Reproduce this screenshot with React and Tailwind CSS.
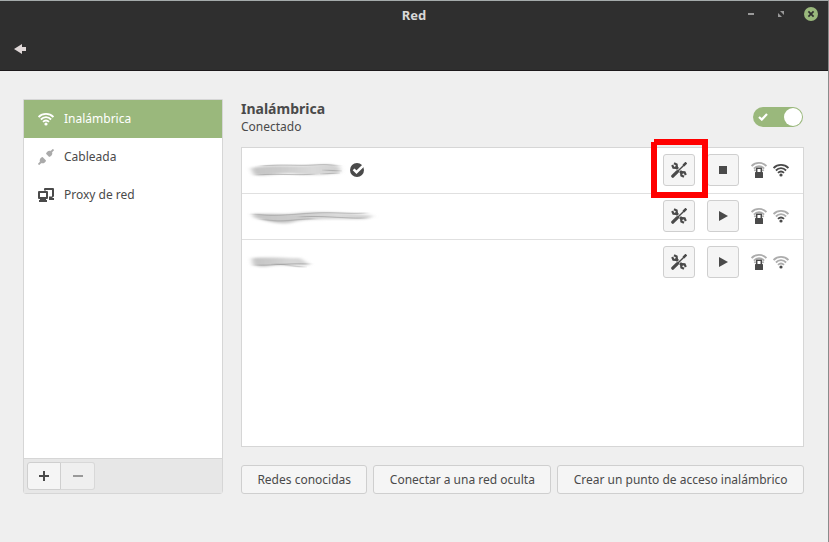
import React, { useState } from 'react';
import clsx from 'clsx';

const WifiIcon = ({ strength = 4, className }) => {
  const level = (n) => (strength >= n ? 1 : 0.45);
  return (
    <svg viewBox="0 0 16 16" className={clsx('w-4 h-4 shrink-0', className)} fill="none" stroke="currentColor" strokeWidth="1.8" aria-hidden="true">
      <path d="M0.6 6C4.6 1.9 11.4 1.9 15.4 6" opacity={level(4)} />
      <path d="M2.9 8.5C5.9 5.4 10.1 5.4 13.1 8.5" opacity={level(3)} />
      <path d="M5 10.9C6.8 9 9.2 9 11 10.9" opacity={level(2)} />
      <circle cx="8" cy="13" r="1.6" fill="currentColor" stroke="none" />
    </svg>
  );
};

const SecureWifiIcon = () => (
  <svg viewBox="0 0 16 16" className="w-4 h-4 shrink-0" fill="none" stroke="currentColor" role="img" aria-label="Red protegida">
    <g opacity="0.45" strokeWidth="1.8">
      <path d="M0.6 4C4.6 -0.1 11.4 -0.1 15.4 4" />
      <path d="M2.9 6.6C5.9 3.4 10.1 3.4 13.1 6.6" />
      <path d="M3.4 8.8L4.6 7.6M12.6 8.8L11.4 7.6" />
    </g>
    <path d="M5.7 10.5V6.2H10.3V10.5" strokeWidth="1.5" strokeLinejoin="round" />
    <rect x="4" y="10" width="8" height="6" rx="0.5" fill="currentColor" stroke="none" />
  </svg>
);

const CableIcon = () => (
  <svg viewBox="0 0 16 16" className="w-4 h-4 shrink-0 text-[#aaaaaa]" fill="currentColor" aria-hidden="true">
    <path d="M0.5 15.5L3 13M13 3L15.5 0.5" stroke="currentColor" strokeWidth="1.8" />
    <path d="M1.8 12.6C1.2 10.4 2.8 8.4 4.6 8L8 11.4C7.6 13.4 5.6 14.8 3.4 14.2Z" />
    <path d="M8 4.8C8.4 2.8 10.4 1.3 12.4 1.8L14.2 3.6C14.8 5.6 13.2 7.6 11.2 8Z" />
  </svg>
);

const ProxyIcon = () => (
  <svg viewBox="0 0 16 16" className="w-4 h-4 shrink-0" fill="currentColor" fillRule="evenodd" aria-hidden="true">
    <path d="M7 1H15A1 1 0 0 1 16 2V9A1 1 0 0 1 15 10H14.5V11H16V13H11V9.5H14V3H8V3.5H6V2A1 1 0 0 1 7 1Z" />
    <path d="M1 4H9A1 1 0 0 1 10 5V11A1 1 0 0 1 9 12H8V13H9V15H1V13H2V12H1A1 1 0 0 1 0 11V5A1 1 0 0 1 1 4ZM2 6V10H8V6Z" />
  </svg>
);

const ToolsIcon = () => (
  <svg viewBox="0 0 16 16" className="w-4 h-4" fill="none" stroke="currentColor" aria-hidden="true">
    <path d="M4.6 4.6L11.4 11.4" strokeWidth="2.8" />
    <path d="M3 1.2L5.6 2.4L5.8 4.4L4.6 5.8L2.4 5.6L1.2 3" strokeWidth="2.2" />
    <path d="M13 14.8L10.4 13.6L10.2 11.6L11.4 10.2L13.6 10.4L14.8 13" strokeWidth="2.2" />
    <path d="M6 10L14 2" strokeWidth="3" className="stroke-[#f5f5f5]" />
    <path d="M7 9L13.6 2.4" strokeWidth="1.4" />
    <path d="M12.4 3.6L15.4 0.6" strokeWidth="2.6" />
    <path d="M1.8 14.2L6.4 9.6" strokeWidth="3.2" strokeLinecap="round" />
  </svg>
);

const ConnectedIcon = () => (
  <svg viewBox="0 0 14 14" className="w-3.5 h-3.5 ml-2 shrink-0" role="img" aria-label="Conectada">
    <circle cx="7" cy="7" r="7" fill="currentColor" />
    <path d="M3.6 6.4L6.5 9.2L14 2" fill="none" stroke="white" strokeWidth="2.6" />
  </svg>
);

// Network names are smeared out, each with its own strokes
const smudges = {
  first: {
    width: 92,
    body: 'M1 7C20 3 42 6 62 4S84 4 90 6L90 12C72 14 62 15 46 13S18 16 4 14Z',
    lines: ['M12 5C32 3 48 5 64 4S80 4 88 5', 'M8 14C26 12 48 15 64 13', 'M74 9L90 10', 'M72 13L88 12'],
  },
  second: {
    width: 126,
    body: 'M2 7C20 6 34 8 50 6S96 5 124 9L116 12C84 13 58 11 44 15S18 14 5 11Z',
    lines: ['M4 7C24 10 44 7 64 6S96 7 116 6', 'M12 12C32 17 48 11 64 12', 'M50 10C70 8 98 12 114 11'],
  },
  third: {
    width: 62,
    body: 'M2 5C20 4 36 5 50 5L60 12C42 14 30 11 20 13S8 13 3 12Z',
    lines: ['M6 12C20 13 34 10 58 11', 'M24 11C38 11 44 14 54 14'],
  },
};

const Smudge = ({ name }) => {
  const { width, body, lines } = smudges[name];
  return (
    <svg width={width} height="18" viewBox={`0 0 ${width} 18`} className="shrink-0 overflow-visible" role="img" aria-label="Red oculta">
      <defs>
        <filter id={`soft-${name}`} x="-10%" y="-40%" width="120%" height="180%">
          <feGaussianBlur stdDeviation="2.4 0.9" />
        </filter>
        <filter id={`fine-${name}`} x="-10%" y="-200%" width="120%" height="500%">
          <feGaussianBlur stdDeviation="3 0.5" />
        </filter>
        <linearGradient id={`shade-${name}`}>
          <stop offset="0" stopColor="#c4c4c4" />
          <stop offset="0.35" stopColor="#cccccc" />
          <stop offset="0.7" stopColor="#dadada" />
          <stop offset="1" stopColor="#d0d0d0" />
        </linearGradient>
      </defs>
      <path d={body} fill={`url(#shade-${name})`} filter={`url(#soft-${name})`} />
      {lines.map((line) => (
        <path key={line} d={line} fill="none" stroke="#8c8c8c" opacity="0.55" filter={`url(#fine-${name})`} />
      ))}
    </svg>
  );
};

const sections = [
  { id: 'wifi', label: 'Inalámbrica', icon: WifiIcon },
  { id: 'wired', label: 'Cableada', icon: CableIcon },
  { id: 'proxy', label: 'Proxy de red', icon: ProxyIcon },
];

const networks = [
  { id: 'first', connected: true, strength: 4, highlighted: true },
  { id: 'second', connected: false, strength: 2 },
  { id: 'third', connected: false, strength: 1 },
];

const squareButton = 'w-8 h-8 flex items-center justify-center rounded-[3px] border border-[#cfcfcf] bg-[#f5f5f5]';

const NetworkRow = ({ network }) => (
  <li className="flex items-center h-[46px] pl-2 pr-3.5 pb-px border-b border-[#e0e0e0] last:border-transparent">
    <Smudge name={network.id} />
    {network.connected && <ConnectedIcon />}
    <div className="relative ml-auto mr-3">
      <button type="button" aria-label="Configurar" className={squareButton}>
        <ToolsIcon />
      </button>
      {network.highlighted && (
        <svg viewBox="0 0 57 59" className="absolute -left-3 -top-[15px] w-[57px] h-[59px] max-w-none pointer-events-none" aria-hidden="true">
          <path d="M3 0H57V59H0V3H3ZM6 6V53H51V6Z" fill="#ff0000" fillRule="evenodd" />
        </svg>
      )}
    </div>
    <button type="button" aria-label={network.connected ? 'Desconectar' : 'Conectar'} className={clsx(squareButton, 'mr-3')}>
      <svg viewBox="0 0 16 16" className="w-4 h-4" fill="currentColor" aria-hidden="true">
        {network.connected ? <rect x="4" y="4" width="8" height="8" /> : <path d="M4 3L13 8L4 13Z" />}
      </svg>
    </button>
    <SecureWifiIcon />
    <WifiIcon strength={network.strength} className="ml-1.5" />
  </li>
);

const actions = ['Redes conocidas', 'Conectar a una red oculta', 'Crear un punto de acceso inalámbrico'];

const App = () => {
  const [section, setSection] = useState('wifi');
  const [enabled, setEnabled] = useState(true);

  return (
    <div className="min-h-screen flex flex-col bg-[#efefef] border-t border-t-[#a5abab] border-r border-r-[#8b8b8b] text-[#4a4a4a] text-xs font-['Noto_Sans',sans-serif]">
      {/* Title bar */}
      <header className="bg-[#2f2f2f] border-b border-[#1c191b] text-[#d8d8d8]">
        <div className="grid grid-cols-[1fr_auto_1fr] items-center h-7 px-2.5">
          <span />
          <h1 className="pt-0.5 text-[13px] font-bold">Red</h1>
          <div className="flex items-center justify-end gap-4 pb-0.5 text-[#9a9a9a]">
            <button type="button" aria-label="Minimizar">
              <svg viewBox="0 0 14 14" className="w-3.5 h-3.5" fill="currentColor"><rect x="4" y="6" width="6" height="2" /></svg>
            </button>
            <button type="button" aria-label="Maximizar">
              <svg viewBox="0 0 14 14" className="w-3.5 h-3.5" fill="currentColor"><path d="M6 4H10V8ZM4 6V10H8Z" /></svg>
            </button>
            <button type="button" aria-label="Cerrar">
              <svg viewBox="0 0 14 14" className="w-3.5 h-3.5">
                <circle cx="7" cy="7" r="7" fill="#9ab87c" />
                <path d="M4.4 4.4L9.6 9.6M9.6 4.4L4.4 9.6" stroke="#2f2f2f" strokeWidth="1.7" />
              </svg>
            </button>
          </div>
        </div>
        <div className="flex items-center h-[41px] px-3 pb-0.5">
          <button type="button" aria-label="Atrás" className="text-[#e0d8d8]">
            <svg viewBox="0 0 16 16" className="w-4 h-4" fill="currentColor"><path d="M2 8L10 3V6H14V10H10V13Z" /></svg>
          </button>
        </div>
      </header>

      <div className="flex-1 flex gap-[18px] pt-7 pb-12 pl-[23px] pr-6">
        {/* Sidebar */}
        <aside className="w-[200px] shrink-0 flex flex-col rounded-b-[3px] border border-[#d6d6d6] bg-white">
          <nav className="flex-1">
            {sections.map((item) => (
              <button
                key={item.id}
                type="button"
                onClick={() => setSection(item.id)}
                className={clsx(
                  'w-full h-[38px] px-3.5 flex items-center gap-2.5 text-left',
                  section === item.id && 'bg-[#9ab87c] text-white'
                )}
              >
                <item.icon />
                <span>{item.label}</span>
              </button>
            ))}
          </nav>
          <div className="flex p-[3px] border-t border-[#d6d6d6] bg-[#e7e7e7]">
            <button type="button" aria-label="Añadir" className="w-[34px] h-7 flex items-center justify-center rounded-l-[3px] border border-[#cfcfcf] bg-[#f5f5f5]">
              <svg viewBox="0 0 10 10" className="w-2.5 h-2.5" fill="currentColor"><path d="M4 0H6V4H10V6H6V10H4V6H0V4H4Z" /></svg>
            </button>
            <button type="button" disabled aria-label="Quitar" className="w-[34px] h-7 flex items-center justify-center rounded-r-[3px] border border-l-0 border-[#d8d8d8] bg-[#efefef] text-[#999999]">
              <svg viewBox="0 0 10 10" className="w-2.5 h-2.5" fill="currentColor"><rect y="4" width="10" height="2" /></svg>
            </button>
          </div>
        </aside>

        {/* Wireless panel */}
        <main className="flex-1 min-w-0 flex flex-col">
          <div className="flex justify-between h-12 pr-px">
            <div>
              <h2 className="text-sm leading-5 font-bold">
                <label htmlFor="wifi-switch">Inalámbrica</label>
              </h2>
              <p className="leading-4">Conectado</p>
            </div>
            <div className="relative mt-2 w-[50px] h-5">
              <input
                id="wifi-switch"
                type="checkbox"
                role="switch"
                checked={enabled}
                onChange={(e) => setEnabled(e.target.checked)}
                className="peer block appearance-none w-full h-full rounded-full bg-[#c4c4c4] checked:bg-[#9ab87c]"
              />
              <span className="absolute top-px left-px w-[18px] h-[18px] rounded-full bg-white pointer-events-none peer-checked:left-auto peer-checked:right-px" />
              <svg viewBox="0 0 10 8" className="absolute left-[5px] top-1.5 w-2.5 h-2 pointer-events-none hidden peer-checked:block" fill="none" stroke="white" strokeWidth="2.2">
                <path d="M1 4L3.8 6.6L9 1" />
              </svg>
            </div>
          </div>

          <ul className="flex-1 bg-white border border-[#d6d6d6]">
            {networks.map((network) => (
              <NetworkRow key={network.id} network={network} />
            ))}
          </ul>

          <div className="flex gap-1.5 mt-[18px]">
            {actions.map((action) => (
              <button key={action} type="button" className="grow h-[29px] px-[14px] rounded-[3px] border border-[#cfcfcf] bg-[#f5f5f5] whitespace-nowrap">
                {action}
              </button>
            ))}
          </div>
        </main>
      </div>
    </div>
  );
};

export default App;
